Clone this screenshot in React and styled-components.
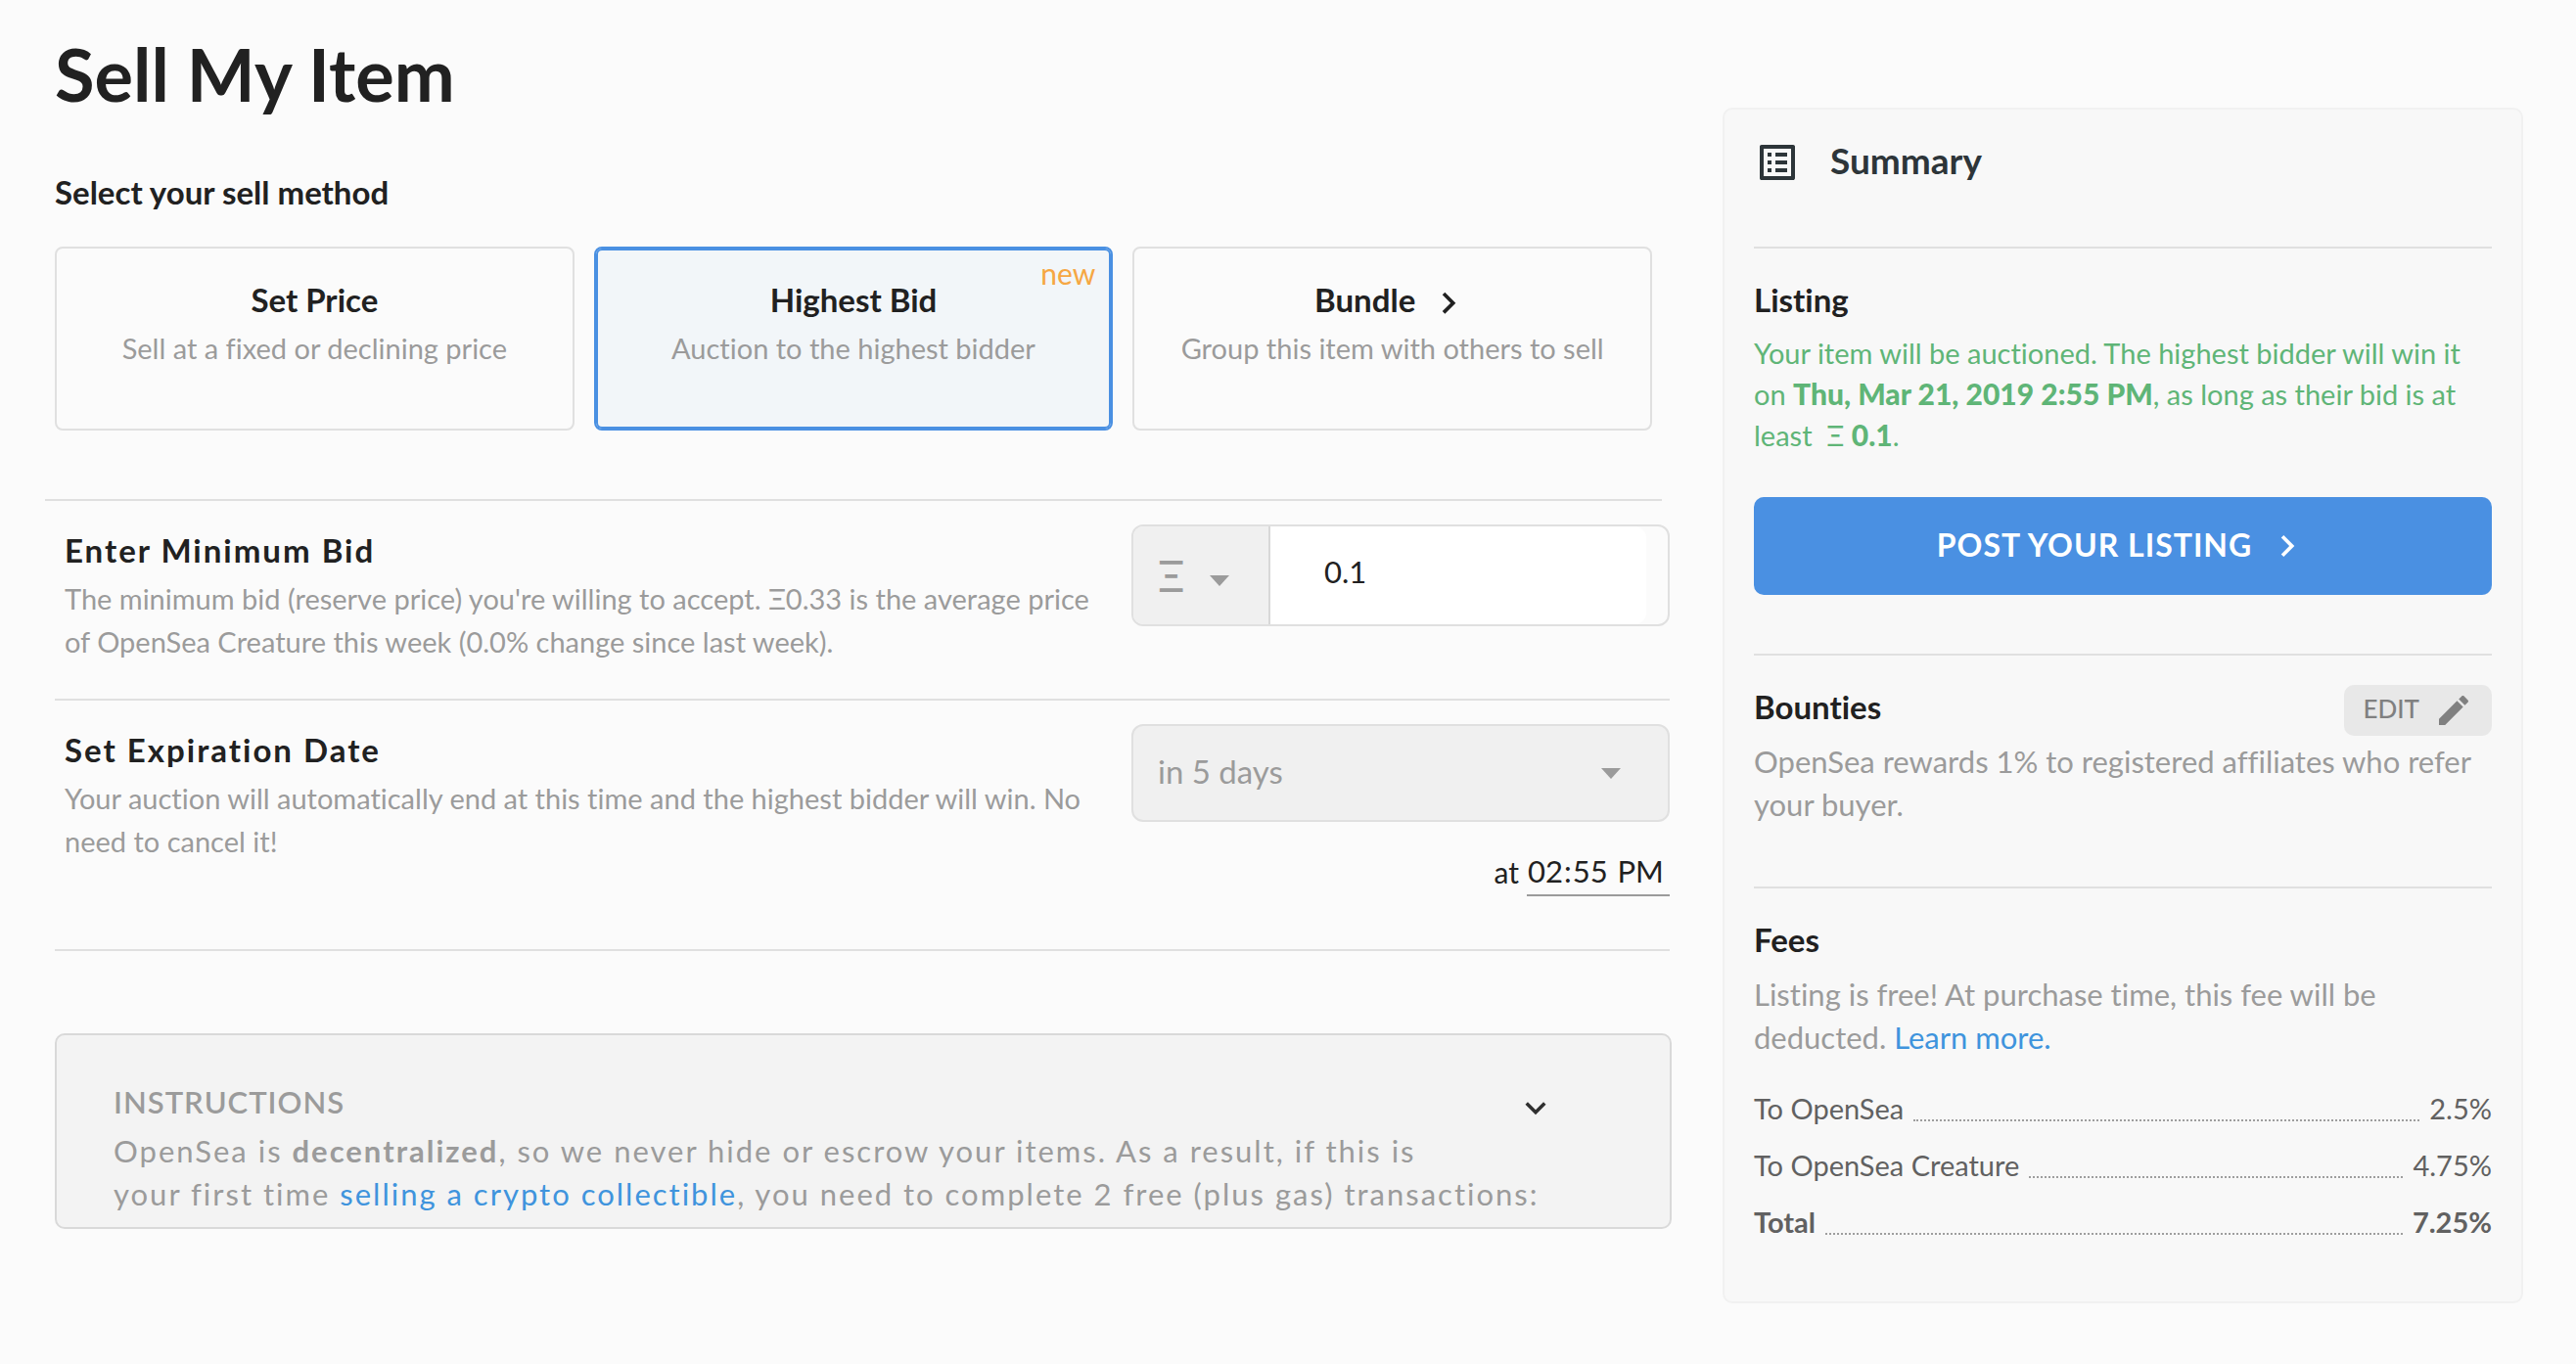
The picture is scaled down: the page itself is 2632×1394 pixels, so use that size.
import React, { useState } from "react";
import styled, { createGlobalStyle } from "styled-components";

const color = {
  page: "#fbfbfb",
  panel: "#f8f8f8",
  ink: "#212121",
  muted: "#9b9b9b",
  rule: "#e0e0e0",
  field: "#f0f0f0",
  blue: "#4a90e2",
  link: "#3f94dd",
  green: "#5fb577",
};

const GlobalStyle = createGlobalStyle`
  *, *::before, *::after { box-sizing: border-box; }
  body {
    margin: 0;
    background: ${color.page};
    color: ${color.ink};
    font-family: Lato, "Open Sans", sans-serif;
    font-variant-ligatures: none;
  }
  button, input, select { font-family: inherit; font-variant-ligatures: inherit; }
`;

const Page = styled.div`
  display: grid;
  grid-template-columns: minmax(0, 1fr) minmax(0, 818px);
  column-gap: 52px;
  align-items: start;
  padding: 28px 54px 60px 56px;
`;

const Main = styled.main`
  min-width: 0;
`;

const PageTitle = styled.h1`
  margin: 0 0 50px;
  font-size: 74px;
  line-height: 96px;
  font-weight: 700;
`;

const Heading = styled.h2`
  margin: 0;
  font-size: 33px;
  line-height: 44px;
  font-weight: 700;
  letter-spacing: ${(p) => (p.$spaced ? "2px" : "normal")};
`;

const MethodList = styled.div`
  display: grid;
  grid-template-columns: repeat(3, minmax(0, 1fr));
  gap: 20px;
  margin-top: 34px;
  padding-right: 20px;
`;

const MethodCard = styled.button`
  position: relative;
  display: flex;
  flex-direction: column;
  align-items: center;
  gap: 6px;
  height: 188px;
  padding: 30px 16px 0;
  border: 2px solid ${(p) => (p.$selected ? color.blue : color.rule)};
  border-radius: 8px;
  background: ${(p) => (p.$selected ? "#f2f6f9" : "transparent")};
  box-shadow: ${(p) => (p.$selected ? `inset 0 0 0 2px ${color.blue}` : "none")};
  color: ${color.ink};
  cursor: pointer;
`;

const MethodName = styled.span`
  display: flex;
  align-items: flex-end;
  gap: 12px;
  font-size: 33px;
  line-height: 44px;
  font-weight: 700;
`;

const MethodHint = styled.span`
  color: ${color.muted};
  font-size: 29px;
  line-height: 44px;
`;

const NewBadge = styled.span`
  position: absolute;
  top: 5px;
  right: 16px;
  color: #f6a743;
  font-size: 30px;
  line-height: 40px;
`;

const FormDivider = styled.hr`
  height: 2px;
  margin: 70px 10px 0 -10px;
  border: 0;
  background: ${color.rule};
`;

const FormRow = styled.section`
  display: grid;
  grid-template-columns: minmax(0, 1fr) minmax(0, 550px);
  column-gap: 12px;
  align-items: start;
  margin-right: 2px;
  padding: 24px 0 ${(p) => (p.$last ? 54 : 36)}px;
  border-bottom: 2px solid ${color.rule};
`;

const FormText = styled.div`
  padding: 4px 0 0 10px;
`;

const Hint = styled.p`
  margin: ${(p) => p.$top}px 0 0;
  color: ${color.muted};
  font-size: ${(p) => (p.$large ? 31 : 29)}px;
  line-height: 44px;
`;

const AmountField = styled.div`
  display: grid;
  grid-template-columns: 140px minmax(0, 1fr);
  height: 104px;
  padding-right: 22px;
  border: 2px solid ${color.rule};
  border-radius: 12px;
  overflow: hidden;
`;

const SelectWrap = styled.div`
  position: relative;
  display: grid;
`;

const CurrencySelect = styled.select`
  appearance: none;
  padding: 0 0 0 25px;
  border: 0;
  border-right: 2px solid #d8d8d8;
  border-radius: 0;
  background: ${color.field};
  color: ${color.muted};
  font-size: 44px;
`;

const AmountInput = styled.input`
  width: 100%;
  padding: 0 20px 8px 55px;
  border: 0;
  border-radius: 0 12px 12px 0;
  background: #ffffff;
  color: ${color.ink};
  font-size: 31px;
`;

const DateSelect = styled.select`
  appearance: none;
  height: 100px;
  padding: 0 90px 4px 25px;
  border: 2px solid ${color.rule};
  border-radius: 12px;
  background: ${color.field};
  color: ${color.muted};
  font-size: 33px;
`;

const Triangle = styled.svg`
  position: absolute;
  top: ${(p) => p.$top}px;
  right: ${(p) => p.$right}px;
  width: 20px;
  height: 11px;
  fill: ${color.muted};
  pointer-events: none;
`;

const TimeRow = styled.div`
  display: flex;
  justify-content: flex-end;
  align-items: center;
  gap: 8px;
  margin-top: 22px;
  font-size: 30px;
`;

const TimeInput = styled.input`
  width: 146px;
  height: 54px;
  padding: 4px 0 0;
  border: 0;
  border-bottom: 2px solid ${color.muted};
  background: transparent;
  color: ${color.ink};
  font-size: 31px;
  &::-webkit-calendar-picker-indicator { display: none; }
`;

const TimeLabel = styled.label`
  padding-top: 4px;
`;

const Instructions = styled.section`
  margin-top: 84px;
  padding: 46px 116px 12px 58px;
  border: 2px solid #d9d9d9;
  border-radius: 10px;
  background: #f3f3f3;
  color: ${color.muted};
`;

const InstructionsHead = styled.div`
  display: flex;
  justify-content: space-between;
  align-items: flex-end;
`;

const InstructionsTitle = styled.h2`
  margin: 0;
  font-size: 31px;
  line-height: 44px;
  font-weight: 600;
  letter-spacing: 1px;
`;

const InstructionsText = styled.p`
  margin: 6px 0 0;
  font-size: 31px;
  line-height: 44px;
  letter-spacing: 2px;
`;

const IconButton = styled.button`
  display: flex;
  padding: 0;
  border: 0;
  background: none;
  color: #2f2f2f;
  cursor: pointer;
`;

const Link = styled.a`
  color: ${color.link};
  text-decoration: none;
`;

const Summary = styled.aside`
  margin-top: 82px;
  padding: 30px 30px 52px;
  border: 2px solid #f1f1f1;
  border-radius: 10px;
  background: ${color.panel};
`;

const SummaryHead = styled.header`
  display: flex;
  align-items: flex-start;
  gap: 30px;
  padding-bottom: 62px;
  color: #2d3539;
`;

const SummaryTitle = styled.h2`
  margin: 0;
  font-size: 37px;
  line-height: 44px;
  font-weight: 700;
`;

const SummarySection = styled.section`
  padding: 30px 0 ${(p) => p.$bottom}px;
  border-top: 2px solid ${color.rule};
`;

const SectionHead = styled.div`
  display: flex;
  justify-content: space-between;
  align-items: flex-start;
  height: 56px;
`;

const ListingText = styled.p`
  margin: 0 0 42px;
  color: ${color.green};
  font-size: 29px;
  line-height: 42px;
`;

const Strong = styled.strong`
  font-size: 30px;
  line-height: 30px;
  font-weight: 900;
`;

const PostButton = styled.button`
  display: flex;
  justify-content: center;
  align-items: center;
  gap: 14px;
  width: 100%;
  height: 100px;
  border: 0;
  border-radius: 10px;
  background: ${color.blue};
  color: #ffffff;
  font-size: 32px;
  font-weight: 700;
  letter-spacing: 1px;
  cursor: pointer;
`;

const ButtonLabel = styled.span`
  padding-bottom: 4px;
`;

const EditButton = styled.button`
  display: flex;
  align-items: center;
  gap: 15px;
  height: 52px;
  padding: 0 19px;
  border: 0;
  border-radius: 10px;
  background: #e8e8e8;
  color: #808080;
  font-size: 26px;
  font-weight: 500;
  cursor: pointer;
`;

const FeeList = styled.dl`
  margin: 22px 0 0;
  color: #616161;
  font-size: 29px;
  line-height: 58px;
`;

const FeeRow = styled.div`
  display: flex;
  font-weight: ${(p) => (p.$total ? 700 : 400)};
`;

const Leader = styled.span`
  flex: 1;
  margin: 0 10px 16px;
  border-bottom: 2px dotted #9e9e9e;
`;

const FeeValue = styled.dd`
  margin: 0;
`;

const Icon = styled.svg`
  flex: none;
  width: ${(p) => p.$size}px;
  height: ${(p) => p.$size}px;
  fill: currentColor;
`;

const ChevronRight = ({ drop = 0 }) => (
  <Icon $size={44} viewBox={`0 ${-drop} 24 24`} aria-hidden="true">
    <path d="M10 6L8.59 7.41 13.17 12l-4.58 4.59L10 18l6-6z" />
  </Icon>
);

const Caret = (props) => (
  <Triangle viewBox="0 0 20 11" aria-hidden="true" {...props}>
    <path d="M0 0h20L10 11z" />
  </Triangle>
);

const methods = [
  { id: "price", name: "Set Price", hint: "Sell at a fixed or declining price" },
  { id: "bid", name: "Highest Bid", hint: "Auction to the highest bidder", isNew: true },
  { id: "bundle", name: "Bundle", hint: "Group this item with others to sell", leads: true },
];

const fees = [
  { label: "To OpenSea", value: "2.5%" },
  { label: "To OpenSea Creature", value: "4.75%" },
  { label: "Total", value: "7.25%", total: true },
];

export default function App() {
  const [method, setMethod] = useState("bid");

  return (
    <>
      <GlobalStyle />
      <Page>
        <Main>
          <PageTitle>Sell My Item</PageTitle>
          <Heading>Select your sell method</Heading>
          <MethodList>
            {methods.map((m) => (
              <MethodCard
                key={m.id}
                type="button"
                $selected={method === m.id}
                aria-pressed={method === m.id}
                onClick={() => setMethod(m.id)}
              >
                <MethodName>
                  {m.name}
                  {m.leads && <ChevronRight drop={2} />}
                </MethodName>
                <MethodHint>{m.hint}</MethodHint>
                {m.isNew && <NewBadge>new</NewBadge>}
              </MethodCard>
            ))}
          </MethodList>

          <FormDivider />
          <FormRow>
            <FormText>
              <Heading as="label" htmlFor="amount" $spaced>Enter Minimum Bid</Heading>
              <Hint $top={6}>
                The minimum bid (reserve price) you're willing to accept. Ξ0.33 is the average price
                of OpenSea Creature this week (0.0% change since last week).
              </Hint>
            </FormText>
            <AmountField>
              <SelectWrap>
                <CurrencySelect aria-label="Currency" defaultValue="eth">
                  <option value="eth">Ξ</option>
                </CurrencySelect>
                <Caret $top={50} $right={42} />
              </SelectWrap>
              <AmountInput id="amount" type="text" inputMode="decimal" defaultValue="0.1" />
            </AmountField>
          </FormRow>
          <FormRow $last>
            <FormText>
              <Heading as="label" htmlFor="expiration" $spaced>Set Expiration Date</Heading>
              <Hint $top={6}>
                Your auction will automatically end at this time and the highest bidder will win. No
                need to cancel it!
              </Hint>
            </FormText>
            <div>
              <SelectWrap>
                <DateSelect id="expiration" defaultValue="5">
                  <option value="5">in 5 days</option>
                </DateSelect>
                <Caret $top={45} $right={50} />
              </SelectWrap>
              <TimeRow>
                <TimeLabel htmlFor="time">at</TimeLabel>
                <TimeInput id="time" type="time" defaultValue="14:55" />
              </TimeRow>
            </div>
          </FormRow>

          <Instructions>
            <InstructionsHead>
              <InstructionsTitle>INSTRUCTIONS</InstructionsTitle>
              <IconButton type="button" aria-label="Expand instructions">
                <Icon $size={42} viewBox="0 -3 24 24" aria-hidden="true">
                  <path d="M16.59 8.59L12 13.17 7.41 8.59 6 10l6 6 6-6z" />
                </Icon>
              </IconButton>
            </InstructionsHead>
            <InstructionsText>
              OpenSea is <b>decentralized</b>, so we never hide or escrow your items. As a result, if this is
              <br />
              your first time <Link href="#selling">selling a crypto collectible</Link>, you need to
              complete 2 free (plus gas) transactions:
            </InstructionsText>
          </Instructions>
        </Main>

        <Summary>
          <SummaryHead>
            <Icon $size={48} viewBox="0 0 24 24" aria-hidden="true">
              <path d="M19 5v14H5V5h14m1.100-2H3.900c-.5 0-.9.400-.9.900v16.200c0 .400.400.900.900.900h16.200c.400 0 .900-.5.900-.900V3.900c0-.5-.5-.900-.900-.900zM11 7h6v2h-6V7zm0 4h6v2h-6v-2zm0 4h6v2h-6zM7 7h2v2H7zm0 4h2v2H7zm0 4h2v2H7z" />
            </Icon>
            <SummaryTitle>Summary</SummaryTitle>
          </SummaryHead>

          <SummarySection $bottom={60}>
            <SectionHead>
              <Heading as="h3">Listing</Heading>
            </SectionHead>
            <ListingText>
              Your item will be auctioned. The highest bidder will win it on{" "}
              <Strong>Thu, Mar 21, 2019 2:55 PM</Strong>, as long as their bid is at least &nbsp;Ξ{" "}
              <Strong>0.1</Strong>.
            </ListingText>
            <PostButton type="button">
              <ButtonLabel>POST YOUR LISTING</ButtonLabel>
              <ChevronRight />
            </PostButton>
          </SummarySection>

          <SummarySection $bottom={62}>
            <SectionHead>
              <Heading as="h3">Bounties</Heading>
              <EditButton type="button">
                <ButtonLabel>EDIT</ButtonLabel>
                <Icon $size={40} viewBox="0 0 24 24" aria-hidden="true">
                  <path d="M3 17.250V21h3.750L17.810 9.940l-3.750-3.750L3 17.250zM20.710 7.040c.390-.390.390-1.020 0-1.410l-2.340-2.340c-.390-.390-1.020-.390-1.410 0l-1.830 1.830 3.750 3.750 1.830-1.830z" />
                </Icon>
              </EditButton>
            </SectionHead>
            <Hint $top={0} $large>OpenSea rewards 1% to registered affiliates who refer your buyer.</Hint>
          </SummarySection>

          <SummarySection $bottom={0}>
            <SectionHead>
              <Heading as="h3">Fees</Heading>
            </SectionHead>
            <Hint $top={0} $large>
              Listing is free! At purchase time, this fee will be deducted.{" "}
              <Link href="#fees">Learn more.</Link>
            </Hint>
            <FeeList>
              {fees.map((fee) => (
                <FeeRow key={fee.label} $total={fee.total}>
                  <dt>{fee.label}</dt>
                  <Leader aria-hidden="true" />
                  <FeeValue>{fee.value}</FeeValue>
                </FeeRow>
              ))}
            </FeeList>
          </SummarySection>
        </Summary>
      </Page>
    </>
  );
}
